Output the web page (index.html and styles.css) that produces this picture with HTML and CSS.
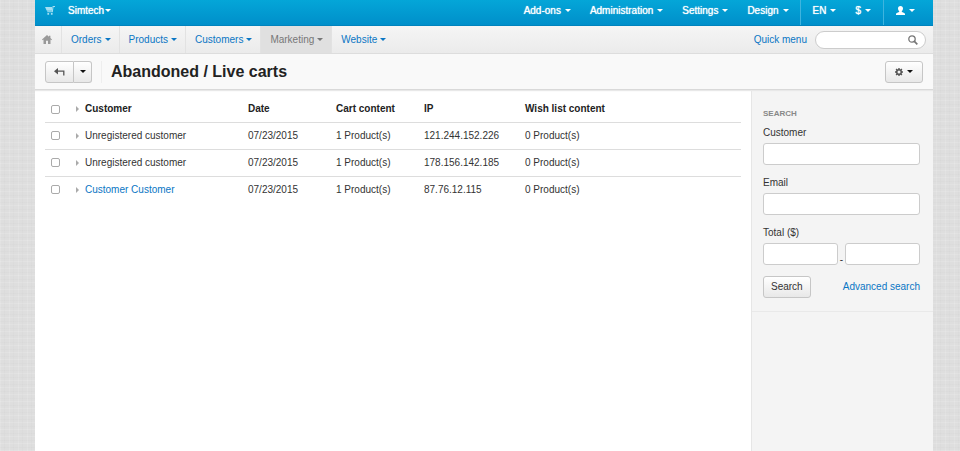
FILE: index.html
```html
<!DOCTYPE html>
<html lang="en">
<head>
    <meta charset="UTF-8">
    <meta name="viewport" content="width=device-width, initial-scale=1.0">
    <title>Abandoned / Live carts</title>
    <link rel="stylesheet" href="styles.css">
</head>
<body>
    <div class="page">
        <!-- Top bar -->
        <header class="topbar">
            <a href="#" class="cart" aria-label="View storefront">
                <svg width="10" height="9" viewBox="0 0 10 9"><path d="M0 1h7L7.200 4.800H1.800zM7.600 0H10v1H8.500L7.800 6.200H2.200V5.300H7zM2.400 7h1.700v1.700H2.400zM5.900 7h1.700v1.700H5.900z" fill="currentColor"/></svg>
            </a>
            <a href="#" class="store">Simtech<span class="caret"></span></a>
            <nav class="menu">
                <a href="#">Add-ons<span class="caret"></span></a>
                <a href="#">Administration<span class="caret"></span></a>
                <a href="#">Settings<span class="caret"></span></a>
                <a href="#">Design<span class="caret"></span></a>
            </nav>
            <div class="tools">
                <a href="#">EN<span class="caret"></span></a>
                <a href="#">$<span class="caret"></span></a>
            </div>
            <div class="tools">
                <a href="#" aria-label="Account">
                    <svg width="9" height="9" viewBox="0 0 9 9"><path d="M4.500 0C6.200 0 7 1 7 2.400c0 1.200-.6 2.200-1.200 2.800v.8C6.600 6.500 9 6.800 9 8v1H0V8c0-1.200 2.400-1.500 3.200-2v-.8C2.600 4.600 2 3.600 2 2.400 2 1 2.800 0 4.500 0z" fill="currentColor"/></svg><span class="caret"></span>
                </a>
            </div>
        </header>

        <!-- Main navigation -->
        <div class="navbar">
            <nav class="nav">
                <a href="#" class="home" aria-label="Home">
                    <svg width="10" height="9" viewBox="0 0 10 9"><path d="M5 0l2 1.800V.8h1.400v2.300L10 4.600l-.6.700-.9-.8V9H6V5.700H4V9H1.500V4.500l-.9.8L0 4.600z" fill="currentColor"/></svg>
                </a>
                <a href="#">Orders<span class="caret"></span></a>
                <a href="#">Products<span class="caret"></span></a>
                <a href="#">Customers<span class="caret"></span></a>
                <a href="#" class="active">Marketing<span class="caret"></span></a>
                <a href="#">Website<span class="caret"></span></a>
            </nav>
            <a href="#" class="quick">Quick menu</a>
            <form class="find">
                <input type="text" aria-label="Search the store">
                <button type="submit" aria-label="Find">
                    <svg width="10" height="10" viewBox="0 0 10 10" fill="none" stroke="currentColor"><circle cx="4" cy="4" r="3.200" stroke-width="1.300"/><path d="M6.400 6.400l2.900 2.900" stroke-width="1.700"/></svg>
                </button>
            </form>
        </div>

        <!-- Title and actions -->
        <div class="titlebar">
            <div class="group">
                <button type="button" class="btn back" aria-label="Back">
                    <svg width="11" height="8" viewBox="0 0 11 8"><path d="M4 0v6.400L0 3.200z" fill="currentColor"/><path d="M3 3.200h6.800V7.500" fill="none" stroke="currentColor" stroke-width="1.300"/></svg>
                </button>
                <button type="button" class="btn drop" aria-label="More"><span class="caret"></span></button>
            </div>
            <h1>Abandoned / Live carts</h1>
            <button type="button" class="btn gear" aria-label="Tools">
                <svg width="8" height="8" viewBox="0 0 8 8" fill="none" stroke="currentColor"><circle cx="4" cy="4" r="2.300" stroke-width="1.600"/><path d="M4 0v1.500M4 6.500V8M0 4h1.500M6.500 4H8M1.100 1.100l1 1M5.900 5.900l1 1M1.100 6.900l1-1M5.900 2.100l1-1" stroke-width="1.400"/></svg><span class="caret"></span>
            </button>
        </div>

        <div class="content">
            <main class="main">
                <table class="carts">
                    <thead>
                        <tr>
                            <th class="check"><input type="checkbox" aria-label="Select all"></th>
                            <th><span class="expand"></span>Customer</th>
                            <th class="date">Date</th>
                            <th class="items">Cart content</th>
                            <th class="ip">IP</th>
                            <th class="wish">Wish list content</th>
                        </tr>
                    </thead>
                    <tbody>
                        <tr>
                            <td><input type="checkbox" aria-label="Select cart 1"></td>
                            <td><span class="expand"></span>Unregistered customer</td>
                            <td>07/23/2015</td>
                            <td>1 Product(s)</td>
                            <td>121.244.152.226</td>
                            <td>0 Product(s)</td>
                        </tr>
                        <tr>
                            <td><input type="checkbox" aria-label="Select cart 2"></td>
                            <td><span class="expand"></span>Unregistered customer</td>
                            <td>07/23/2015</td>
                            <td>1 Product(s)</td>
                            <td>178.156.142.185</td>
                            <td>0 Product(s)</td>
                        </tr>
                        <tr>
                            <td><input type="checkbox" aria-label="Select cart 3"></td>
                            <td><span class="expand"></span><a href="#">Customer Customer</a></td>
                            <td>07/23/2015</td>
                            <td>1 Product(s)</td>
                            <td>87.76.12.115</td>
                            <td>0 Product(s)</td>
                        </tr>
                    </tbody>
                </table>
            </main>

            <aside class="sidebar">
                <form class="filter">
                    <h2>Search</h2>
                    <label for="customer">Customer</label>
                    <input type="text" id="customer">
                    <label for="email">Email</label>
                    <input type="text" id="email">
                    <label for="totalFrom">Total ($)</label>
                    <div class="range">
                        <input type="text" id="totalFrom">
                        <span>-</span>
                        <input type="text" aria-label="Total to">
                    </div>
                    <div class="actions">
                        <button type="submit" class="btn">Search</button>
                        <a href="#">Advanced search</a>
                    </div>
                </form>
            </aside>
        </div>
    </div>
</body>
</html>
```
FILE: styles.css
```css
* {
    box-sizing: border-box;
}
body {
    margin: 0;
    padding: 0 27px 0 35px;
    font-family: "Liberation Sans", Arial, sans-serif;
    font-size: 10px;
    line-height: 14px;
    color: #333333;
    background-color: #dedede;
    /* woven cloth */
    background-image:
        repeating-linear-gradient(0deg, rgba(255, 255, 255, 0.12) 0 1px, transparent 1px 3px, rgba(0, 0, 0, 0.01) 3px 4px, transparent 4px 7px),
        repeating-linear-gradient(90deg, rgba(255, 255, 255, 0.12) 0 1px, transparent 1px 4px, rgba(0, 0, 0, 0.01) 4px 5px, transparent 5px 9px);
}
a {
    color: #0a76c4;
    text-decoration: none;
}
svg {
    display: block;
}
input, button {
    margin: 0;
    font: inherit;
    color: inherit;
}
.page {
    display: flex;
    flex-direction: column;
    min-height: 100vh;
    background-color: #ffffff;
}
.caret {
    display: inline-block;
    margin-left: 4px;
    border-top: 3px solid currentColor;
    border-left: 3px solid transparent;
    border-right: 3px solid transparent;
}

/* Top bar */
.topbar {
    display: flex;
    height: 26px;
    padding-bottom: 4px;
    background: linear-gradient(#04a6d8, #008fca);
    border-bottom: 1px solid #0083bd;
}
.topbar a {
    display: flex;
    align-items: center;
    color: #ffffff;
    text-shadow: 0 0 1px #ffffff;
}
.topbar .cart {
    width: 33px;
    padding-left: 10px;
    color: #a5dff2;
}
.topbar .store .caret {
    margin-left: 1px;
}
.menu {
    display: flex;
    gap: 19px;
    margin-left: auto;
    padding-right: 11px;
}
.tools {
    display: flex;
    gap: 19px;
    margin-bottom: -4px;
    padding: 0 12px 4px;
    border-left: 1px solid #3fb4de;
}
.tools:last-child {
    padding-right: 18px;
}

/* Main navigation */
.navbar {
    display: flex;
    align-items: center;
    height: 28px;
    background: linear-gradient(#f5f5f5, #ebebeb);
    border-bottom: 1px solid #dddddd;
}
.nav {
    display: flex;
    align-self: stretch;
    margin-right: auto;
}
.nav a {
    display: flex;
    align-items: center;
    padding: 0 8px 0 9px;
    border-right: 1px solid #e2e2e2;
}
.nav a:last-child {
    border-right: none;
}
.nav .caret {
    margin-left: 3px;
}
.nav .home {
    padding: 0 9px 0 7px;
    color: #999999;
}
.nav .active {
    color: #777777;
    background-color: #e0e0e0;
}
.quick {
    margin-right: 8px;
}
.find {
    display: flex;
    width: 111px;
    height: 18px;
    margin-right: 7px;
    background-color: #ffffff;
    border: 1px solid #cccccc;
    border-radius: 9px;
}
.find input {
    flex: 1;
    min-width: 0;
    padding: 0 0 0 8px;
    border: none;
    outline: none;
    background: none;
}
.find button {
    padding: 0 7px 0 4px;
    border: none;
    background: none;
    color: #777777;
}

/* Title and actions */
.titlebar {
    display: flex;
    align-items: center;
    height: 36px;
    padding: 0 10px;
    background-color: #f9f9f9;
    border-bottom: 1px solid #d9d9d9;
    box-shadow: 0 1px 1px #e8e8e8;
    z-index: 1;
}
.titlebar h1 {
    margin: 0 auto 0 9px;
    padding-left: 9px;
    border-left: 1px solid #eeeeee;
    font-size: 16px;
    line-height: 22px;
    color: #222222;
}
.btn {
    display: flex;
    align-items: center;
    justify-content: center;
    height: 22px;
    padding: 0 7px;
    background: linear-gradient(#ffffff, #e8e8e8);
    border: 1px solid #c6c6c6;
    border-radius: 3px;
}
.group {
    display: flex;
}
.back {
    width: 29px;
    border-radius: 3px 0 0 3px;
    color: #555555;
}
.drop {
    width: 18px;
    padding: 0;
    border-left: none;
    border-radius: 0 3px 3px 0;
    color: #111111;
}
.drop .caret {
    margin: 0;
}
.gear {
    width: 38px;
    color: #555555;
}
.gear .caret {
    border-top-color: #111111;
}

/* Carts table */
.content {
    display: flex;
    flex: 1;
}
.main {
    flex: 1;
    padding: 5px 10px 0;
}
.carts {
    width: 100%;
    table-layout: fixed;
    border-collapse: collapse;
}
.carts th, .carts td {
    height: 27px;
    padding: 0 5px;
    border-bottom: 1px solid #dddddd;
    text-align: left;
    white-space: nowrap;
}
.carts th {
    padding-top: 2px;
    color: #222222;
}
.carts tbody tr:last-child td {
    border-bottom: none;
}
.carts .check {
    width: 26px;
}
.carts .date, .carts .items {
    width: 88px;
}
.carts .ip {
    width: 101px;
}
.carts .wish {
    width: 221px;
}
.carts input {
    display: block;
    appearance: none;
    width: 9px;
    height: 9px;
    margin-left: 1px;
    background-color: #ffffff;
    border: 1px solid #aaaaaa;
    border-radius: 2px;
}
.carts input:checked {
    background-color: #0a76c4;
}
.expand {
    display: inline-block;
    margin-right: 6px;
    border-left: 3px solid #aaaaaa;
    border-top: 3px solid transparent;
    border-bottom: 3px solid transparent;
}

/* Search sidebar */
.sidebar {
    width: 182px;
    background-color: #f4f4f4;
    border-left: 1px solid #e6e6e6;
}
.filter {
    padding: 17px 13px 13px 11px;
    border-bottom: 1px solid #e9e9e9;
}
.filter h2 {
    margin: 0 0 5px;
    font-size: 8px;
    line-height: 14px;
    text-transform: uppercase;
    color: #888888;
}
.filter label {
    display: block;
    margin-bottom: 3px;
}
.filter input {
    display: block;
    width: 100%;
    height: 22px;
    margin-bottom: 11px;
    padding: 0 4px;
    background-color: #ffffff;
    border: 1px solid #cccccc;
    border-radius: 3px;
}
.range {
    display: flex;
    align-items: center;
    gap: 2px;
}
.range input {
    flex: 1;
    min-width: 0;
}
.actions {
    display: flex;
    align-items: center;
    justify-content: space-between;
}
```
